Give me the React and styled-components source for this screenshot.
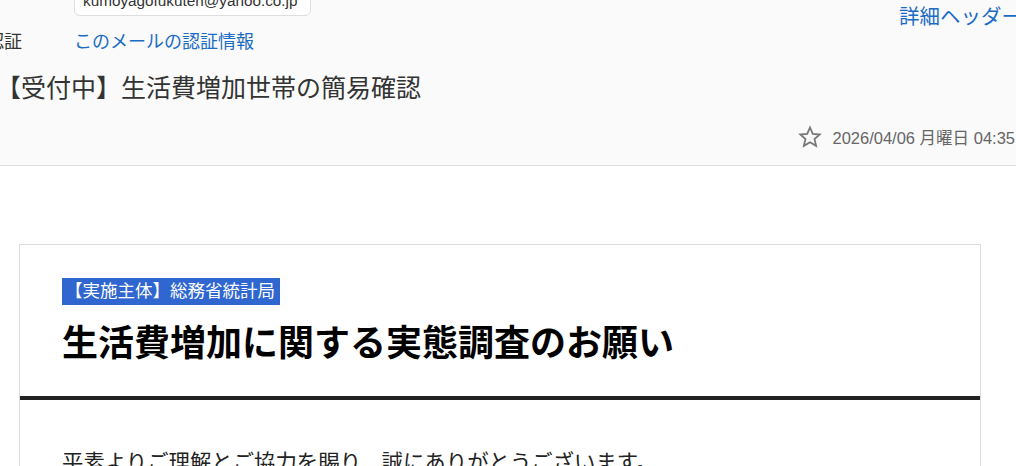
import React from 'react'
import styled, { createGlobalStyle } from 'styled-components';

const GlobalStyle = createGlobalStyle`
    body {
        margin: 0;
        background: #fff;
        overflow: hidden;
        font-family: "Liberation Sans", "Noto Sans CJK JP", sans-serif;
        color: #333;
    }
`;

const Page = styled.div`
    width: 1016px;
    height: 466px;
    overflow: hidden;
`;

const MailHeader = styled.div`
    margin-top: -18px;
    background: #fafafa;
    border-bottom: 1px solid #dddddd;
    padding-bottom: 16px;
`;

const TopLine = styled.div`
    display: flex;
    justify-content: space-between;
    align-items: flex-start;
`;

const Meta = styled.div`
    margin-left: -14px;
    display: flex;
    flex-direction: column;
    gap: 13px;
`;

const MetaRow = styled.div`
    display: flex;
    align-items: center;
`;

const Label = styled.div`
    width: 88px;
    flex-shrink: 0;
    font-size: 18px;
    color: #333;
    line-height: 26px;
`;

const AddressBox = styled.div`
    box-sizing: border-box;
    width: 237px;
    height: 34px;
    padding: 3px 8px 0;
    display: flex;
    align-items: center;
    background: #fff;
    border: 1px solid #dddddd;
    border-radius: 6px;
    font-size: 15.3px;
    color: #333;
`;

const Link = styled.a`
    color: #1a6cc4;
    font-size: 18px;
    line-height: 26px;
    text-decoration: none;
    cursor: pointer;
`;

const DetailLink = styled(Link)`
    margin-top: 22px;
    margin-right: -6px;
    font-size: 20.5px;
`;

const Subject = styled.h1`
    margin: 16px 0 0 -4px;
    font-size: 25px;
    font-weight: normal;
    line-height: 34px;
    color: #333;
`;

const DateRow = styled.div`
    margin-top: 20px;
    display: flex;
    justify-content: flex-end;
    align-items: center;
    gap: 10px;
    height: 24px;
    margin-right: 1px;
`;

const DateText = styled.span`
    font-size: 16.5px;
    color: #666;
`;

const Star = () => (
    <svg width="24" height="24" viewBox="0 0 24 24" fill="none" stroke="#777" strokeWidth="1.8" strokeLinejoin="miter">
        <path d="M12 2.5l2.8 6.4 6.9.6-5.2 4.6 1.6 6.8L12 17.3l-6.1 3.6 1.6-6.8-5.2-4.6 6.9-.6z" />
    </svg>
);

const Body = styled.div`
    padding-top: 78px;
`;

const Card = styled.div`
    box-sizing: border-box;
    margin-left: 19px;
    width: 962px;
    border: 1px solid #dddddd;
    background: #fff;
`;

const CardHead = styled.div`
    padding: 33px 42px 28px;
    border-bottom: 4px solid #222;
`;

const Tag = styled.span`
    display: inline-block;
    height: 27px;
    line-height: 27px;
    padding: 0 5px 0 3px;
    background: #2f66cf;
    color: #fff;
    font-size: 17.5px;
`;

const Title = styled.h2`
    margin: 15px 0 0;
    font-size: 36px;
    font-weight: bold;
    line-height: 48px;
    color: #000;
`;

const CardBody = styled.div`
    padding: 47px 42px 0;
`;

const Paragraph = styled.p`
    margin: 0;
    font-size: 21.4px;
    line-height: 32px;
    color: #222;
`;

const App = () => {
    return (
        <Page>
            <GlobalStyle />
            <MailHeader>
                <TopLine>
                    <Meta>
                        <MetaRow>
                            <Label>ツ</Label>
                            <AddressBox>kumoyagofukuten@yahoo.co.jp</AddressBox>
                        </MetaRow>
                        <MetaRow>
                            <Label>認証</Label>
                            <Link>このメールの認証情報</Link>
                        </MetaRow>
                    </Meta>
                    <DetailLink>詳細ヘッダー</DetailLink>
                </TopLine>
                <Subject>【受付中】生活費増加世帯の簡易確認</Subject>
                <DateRow>
                    <Star />
                    <DateText>2026/04/06 月曜日 04:35</DateText>
                </DateRow>
            </MailHeader>
            <Body>
                <Card>
                    <CardHead>
                        <Tag>【実施主体】総務省統計局</Tag>
                        <Title>生活費増加に関する実態調査のお願い</Title>
                    </CardHead>
                    <CardBody>
                        <Paragraph>平素よりご理解とご協力を賜り、誠にありがとうございます。</Paragraph>
                    </CardBody>
                </Card>
            </Body>
        </Page>
    )
}

export default App;
